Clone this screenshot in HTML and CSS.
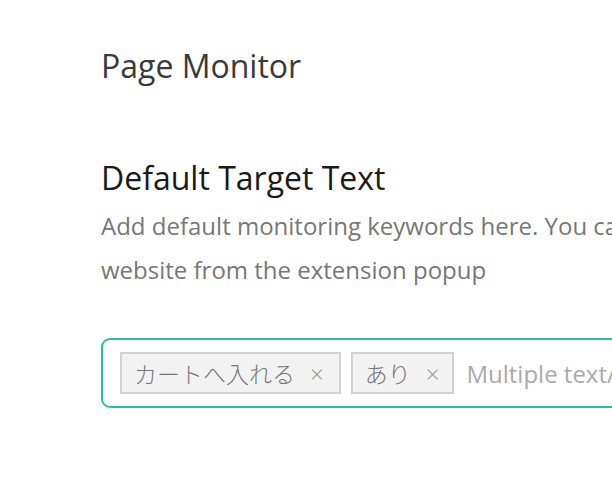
FILE: index.html
```html
<!DOCTYPE html>
<html>
<head>
  <title>Page Monitor | Options</title>
  <meta charset="utf-8">
  <link rel="stylesheet" href="styles.css">
</head>
<body>
  <div class="page">
    <h1 class="brand">Page Monitor</h1>
    <div class="section">
      <h2>Default Target Text</h2>
      <p class="desc">Add default monitoring keywords here. You can also set keywords for each website from the extension popup</p>
      <div class="tags-input">
        <span class="tag">カートへ入れる<span class="remove">×</span></span>
        <span class="tag">あり<span class="remove">×</span></span>
        <input class="new-tag" type="text" placeholder="Multiple text/keywords separated by comma">
      </div>
    </div>
  </div>
</body>
</html>
```

FILE: styles.css
```css
body {
  margin: 0;
  background-color: #fff;
  font-family: "Open Sans", "Noto Sans CJK JP", sans-serif;
  overflow: hidden;
}
.page {
  width: 860px;
  padding: 44px 0 0 101px;
}
.brand {
  margin: 0;
  font-size: 32px;
  font-weight: normal;
  color: #3a3a3a;
  line-height: 44px;
}
.section {
  margin-top: 68px;
}
h2 {
  margin: 0;
  font-size: 32px;
  font-weight: normal;
  color: #1a1a1a;
  line-height: 44px;
}
.desc {
  margin: 4px 0 0;
  font-size: 24px;
  line-height: 44px;
  color: #777;
}
.tags-input {
  margin-top: 46px;
  display: flex;
  align-items: center;
  gap: 10px;
  height: 66px;
  padding: 0 17px;
  border: 2px solid #2bbf9c;
  border-radius: 9px;
}
.tag {
  display: flex;
  align-items: center;
  height: 38px;
  padding: 0 13px 0 12px;
  background-color: #f2f2f2;
  border: 2px solid #d2d2d2;
  font-size: 23px;
  font-weight: 300;
  color: #777;
  white-space: nowrap;
}
.tag:first-child {
  padding-right: 15px;
}
.remove {
  margin-left: 15px;
  font-size: 24px;
  color: #999;
  cursor: pointer;
}
.new-tag {
  flex: 1;
  border: 0;
  outline: none;
  font-family: inherit;
  font-size: 24px;
  color: #555;
}
.new-tag::placeholder {
  color: #aaa;
}
```
